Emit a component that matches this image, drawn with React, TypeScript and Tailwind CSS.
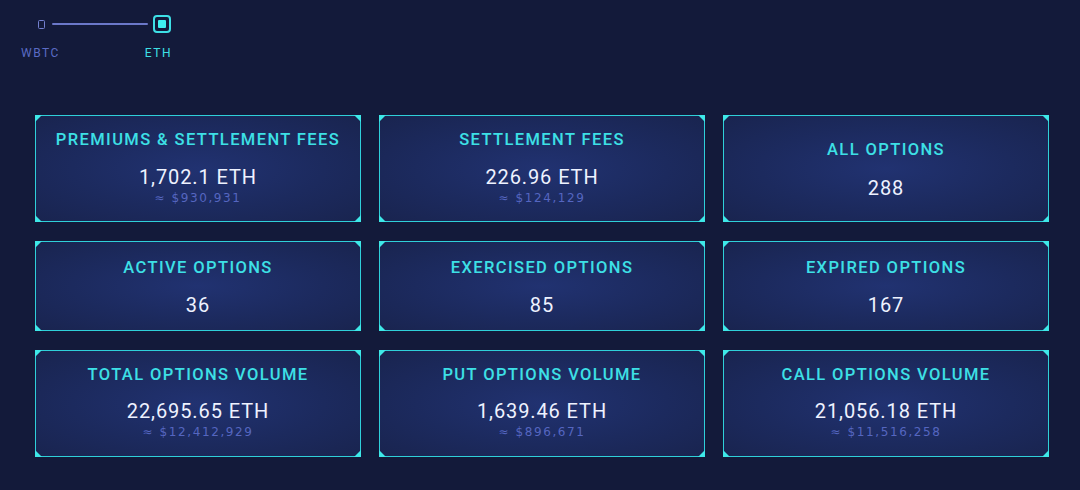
import React from "react";

type Card = { title: string; value: string; sub?: string; pt: string; vm: string };

const cards: Card[] = [
  { title: "PREMIUMS & SETTLEMENT FEES", value: "1,702.1 ETH", sub: "≈ $930,931", pt: "pt-[14px]", vm: "mt-[16px]" },
  { title: "SETTLEMENT FEES", value: "226.96 ETH", sub: "≈ $124,129", pt: "pt-[14px]", vm: "mt-[16px]" },
  { title: "ALL OPTIONS", value: "288", pt: "pt-[24px]", vm: "mt-[17px]" },
  { title: "ACTIVE OPTIONS", value: "36", pt: "pt-[16px]", vm: "mt-[16px]" },
  { title: "EXERCISED OPTIONS", value: "85", pt: "pt-[16px]", vm: "mt-[16px]" },
  { title: "EXPIRED OPTIONS", value: "167", pt: "pt-[16px]", vm: "mt-[16px]" },
  { title: "TOTAL OPTIONS VOLUME", value: "22,695.65 ETH", sub: "≈ $12,412,929", pt: "pt-[14px]", vm: "mt-[15px]" },
  { title: "PUT OPTIONS VOLUME", value: "1,639.46 ETH", sub: "≈ $896,671", pt: "pt-[14px]", vm: "mt-[15px]" },
  { title: "CALL OPTIONS VOLUME", value: "21,056.18 ETH", sub: "≈ $11,516,258", pt: "pt-[14px]", vm: "mt-[15px]" },
];

function Corners() {
  return (
    <>
      <svg className="absolute -left-px -top-px" width="7" height="7" viewBox="0 0 7 7"><path d="M0 0H7L0 7Z" fill="#3ee8e8" /></svg>
      <svg className="absolute -right-px -top-px" width="7" height="7" viewBox="0 0 7 7"><path d="M0 0H7V7Z" fill="#3ee8e8" /></svg>
      <svg className="absolute -left-px -bottom-px" width="7" height="7" viewBox="0 0 7 7"><path d="M0 0V7H7Z" fill="#3ee8e8" /></svg>
      <svg className="absolute -right-px -bottom-px" width="7" height="7" viewBox="0 0 7 7"><path d="M7 0V7H0Z" fill="#3ee8e8" /></svg>
    </>
  );
}

function StatCard({ c, h }: { c: Card; h: string }) {
  return (
    <div
      className={`relative flex flex-col items-center rounded-[3px] border-[1.5px] border-[#2fd0d9] bg-[radial-gradient(ellipse_at_center,#213271_0%,#1c2a5e_55%,#19244f_100%)] ${h} ${c.pt}`}
    >
      <Corners />
      <div className="whitespace-nowrap text-[16.5px] font-medium tracking-[1.4px] text-[#3de0e6] leading-[20px]">{c.title}</div>
      <div className={`${c.vm} whitespace-nowrap text-[20px] tracking-[0.9px] text-[#eef2ff] leading-[22px]`}>{c.value}</div>
      {c.sub && (
        <div
          className="mt-[3px] whitespace-nowrap text-[12px] tracking-[1.6px] text-[#5566c0] leading-[14px]"
          style={{ fontFamily: "'DejaVu Sans', sans-serif" }}
        >
          {c.sub}
        </div>
      )}
    </div>
  );
}

export default function App() {
  return (
    <div className="h-[490px] w-[1080px] overflow-hidden bg-[#131a3a]" style={{ fontFamily: "Roboto, 'Noto Sans', sans-serif" }}>
      <div className="relative h-[115px]">
        <div className="absolute left-[21px] top-[15px] w-[170px]">
          <div className="flex h-[18px] items-center">
            <div className="ml-[17px] h-[9px] w-[7px] rounded-[1.5px] border-[1.5px] border-[#7380cf]" />
            <div className="ml-[7px] h-[2px] w-[96px] rounded-full bg-[#6b78c9]" />
            <div className="ml-[5px] flex h-[18px] w-[18px] items-center justify-center rounded-[4px] border-[2px] border-[#3ee0e6]">
              <div className="h-[8px] w-[8px] rounded-[1px] bg-[#3ef0f0]" />
            </div>
          </div>
          <div className="mt-[13px] flex text-[12px] tracking-[1.5px] leading-[14px]">
            <span className="text-[#5a6bc4]">WBTC</span>
            <span className="ml-[85px] text-[#3ee0e6]">ETH</span>
          </div>
        </div>
      </div>
      <div className="grid grid-cols-3 gap-x-[18px] gap-y-[19px] pl-[35px] pr-[31px]">
        {cards.map((c, i) => (
          <StatCard key={c.title} c={c} h={i >= 3 && i < 6 ? "h-[90px]" : "h-[107px]"} />
        ))}
      </div>
    </div>
  );
}
